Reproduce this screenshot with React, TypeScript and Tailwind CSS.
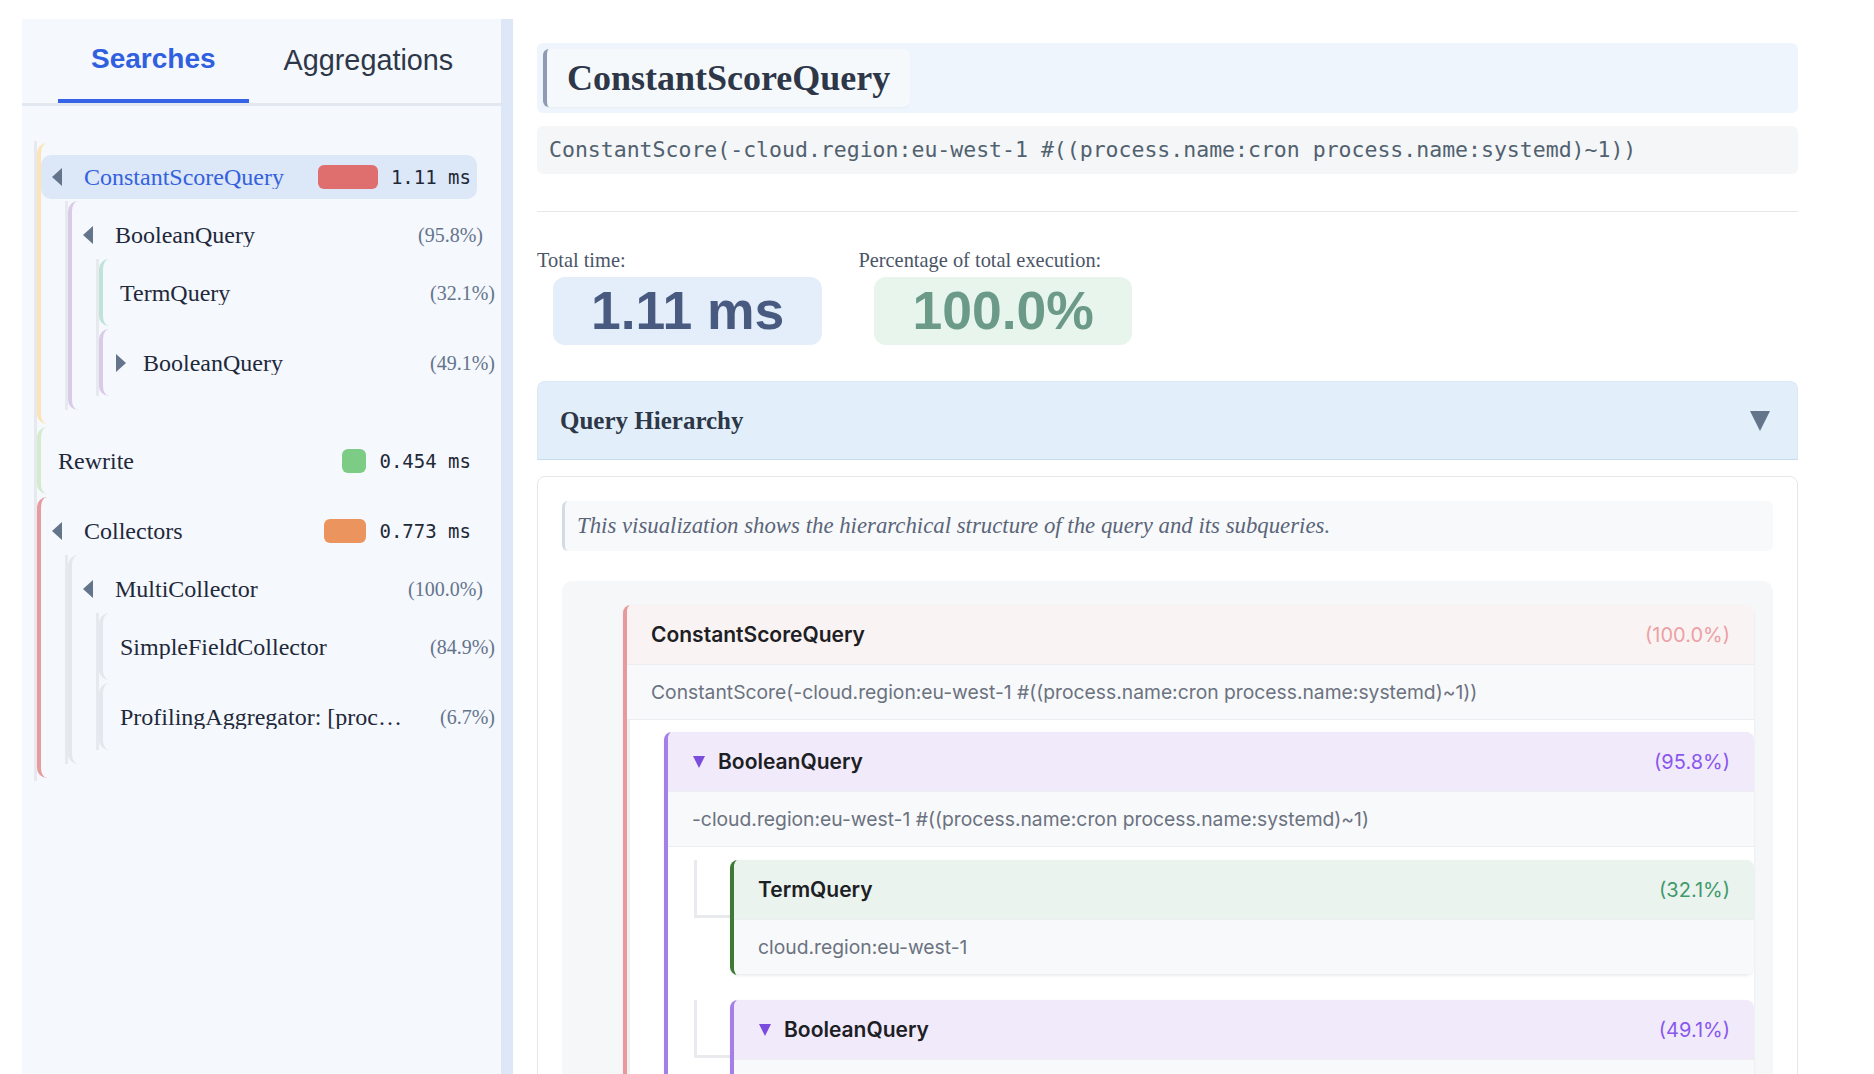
import React from "react";

const SERIF = "font-['Liberation_Serif','Times_New_Roman',serif]";
const SANS = "font-['Liberation_Sans',Arial,sans-serif]";
const MONO = "font-['DejaVu_Sans_Mono',monospace]";
const INTER = "font-['Inter',sans-serif]";

type SNode = {
  name: string;
  border: string;
  pct?: string;
  time?: string;
  barW?: number;
  barCls?: string;
  selected?: boolean;
  collapsed?: boolean;
  children?: SNode[];
};

const tree: SNode[] = [
  {
    name: "ConstantScoreQuery",
    border: "border-[#fde4b6]",
    time: "1.11 ms",
    barW: 60,
    barCls: "bg-[#df6e6e]",
    selected: true,
    children: [
      {
        name: "BooleanQuery",
        border: "border-[#d9cbe8]",
        pct: "(95.8%)",
        children: [
          { name: "TermQuery", border: "border-[#bfe3d7]", pct: "(32.1%)" },
          {
            name: "BooleanQuery",
            border: "border-[#d9cbe8]",
            pct: "(49.1%)",
            collapsed: true,
            children: [],
          },
        ],
      },
    ],
  },
  {
    name: "Rewrite",
    border: "border-[#d4ebce]",
    time: "0.454 ms",
    barW: 24,
    barCls: "bg-[#7dcc86]",
  },
  {
    name: "Collectors",
    border: "border-[#e89b9d]",
    time: "0.773 ms",
    barW: 42,
    barCls: "bg-[#ec945e]",
    children: [
      {
        name: "MultiCollector",
        border: "border-[#e3e7ee]",
        pct: "(100.0%)",
        children: [
          { name: "SimpleFieldCollector", border: "border-[#e3e7ee]", pct: "(84.9%)" },
          {
            name: "ProfilingAggregator: [process.name]",
            border: "border-[#e3e7ee]",
            pct: "(6.7%)",
          },
        ],
      },
    ],
  },
];

function LeftTri() {
  return (
    <svg width="10" height="18" viewBox="0 0 10 18" className="shrink-0">
      <polygon points="10,0 10,18 0,9" fill="#64748b" />
    </svg>
  );
}
function RightTri() {
  return (
    <svg width="10" height="18" viewBox="0 0 10 18" className="shrink-0">
      <polygon points="0,0 0,18 10,9" fill="#64748b" />
    </svg>
  );
}

function SideRow({ node, level }: { node: SNode; level: number }) {
  const hasKids = !!node.children;
  const mr = level === 0 ? "" : level === 1 ? "mr-[-12px]" : "mr-[-24px]";
  const pl = hasKids ? (node.collapsed ? "pl-[13px]" : "pl-[11px]") : "pl-[17px]";
  return (
    <div
      className={`flex items-center h-[44px] rounded-[10px] pr-[6px] ${pl} ${mr} ${
        node.selected ? "bg-[#dce7f8]" : ""
      }`}
    >
      {hasKids && (
        <span className={node.collapsed ? "mr-[17px]" : "mr-[22px]"}>
          {node.collapsed ? <RightTri /> : <LeftTri />}
        </span>
      )}
      <span
        className={`${SERIF} text-[24px] leading-none whitespace-nowrap truncate min-w-0 flex-1 ${
          node.selected ? "text-[#3562dc]" : "text-[#1e293b]"
        }`}
      >
        {node.name}
      </span>
      {node.time && (
        <div className="flex items-center shrink-0 pl-4">
          <span
            className={`h-[24px] rounded-[6px] ${node.barCls}`}
            style={{ width: node.barW }}
          />
          <span className={`${MONO} text-[19px] text-[#1f2937] ml-[13px] whitespace-nowrap`}>
            {node.time}
          </span>
        </div>
      )}
      {node.pct && (
        <span className={`${SERIF} text-[20px] text-[#64748b] shrink-0 pl-[36px] whitespace-nowrap`}>
          {node.pct}
        </span>
      )}
    </div>
  );
}

function SideNode({ node, level }: { node: SNode; level: number }) {
  const showKids = node.children && node.children.length > 0 && !node.collapsed;
  return (
    <div className={`border-l-4 rounded-l-[10px] pt-3 ${showKids ? "pb-3" : "pb-[11px]"} ${node.border}`}>
      <SideRow node={node} level={level} />
      {showKids && (
        <div className="ml-6 mt-[2px] mb-[2px] border-l-[3px] border-[#e6e9ee] flex flex-col gap-[3px]">
          {node.children!.map((c, i) => (
            <SideNode key={i} node={c} level={level + 1} />
          ))}
        </div>
      )}
    </div>
  );
}

function Sidebar() {
  return (
    <div className="w-[491px] shrink-0 h-full bg-[#f5f8fd] border-r-[12px] border-[#dde7f7] flex flex-col">
      <div className="flex pl-9 border-b-[3px] border-[#e2e8f0]">
        <div className={`${SANS} h-[84px] px-[33px] flex items-center border-b-4 border-[#3563e6] text-[28px] font-bold text-[#3060e0]`}>
          Searches
        </div>
        <div className={`${SANS} h-[84px] pl-[35px] pr-[33px] flex items-center text-[28.8px] text-[#2d3748]`}>
          Aggregations
        </div>
      </div>
      <div className="pl-3 pr-6 pt-[35px]">
        <div className="border-l-[3px] border-[#e6e9ee] pt-[2px] pb-[3px] flex flex-col gap-[3px]">
          {tree.map((n, i) => (
            <SideNode key={i} node={n} level={0} />
          ))}
        </div>
      </div>
    </div>
  );
}

type QNode = {
  name: string;
  pct: string;
  desc: string;
  border: string;
  head: string;
  pctCls: string;
  tri?: boolean;
  children?: QNode[];
};

const purple = {
  border: "border-[#a57fe8]",
  head: "bg-[#f1eafa]",
  pctCls: "text-[#8957ee]",
};
const green = {
  border: "border-[#3e7a35]",
  head: "bg-[#ebf3ee]",
  pctCls: "text-[#3f9a6c]",
};

const qtree: QNode = {
  name: "ConstantScoreQuery",
  pct: "(100.0%)",
  desc: "ConstantScore(-cloud.region:eu-west-1 #((process.name:cron process.name:systemd)~1))",
  border: "border-[#e8999b]",
  head: "bg-[#faf3f3]",
  pctCls: "text-[#eba1a4]",
  children: [
    {
      name: "BooleanQuery",
      pct: "(95.8%)",
      desc: "-cloud.region:eu-west-1 #((process.name:cron process.name:systemd)~1)",
      tri: true,
      ...purple,
      children: [
        { name: "TermQuery", pct: "(32.1%)", desc: "cloud.region:eu-west-1", ...green },
        {
          name: "BooleanQuery",
          pct: "(49.1%)",
          desc: "(process.name:cron process.name:systemd)~1",
          tri: true,
          ...purple,
          children: [
            { name: "TermQuery", pct: "(20.3%)", desc: "process.name:cron", ...green },
            { name: "TermQuery", pct: "(18.7%)", desc: "process.name:systemd", ...green },
          ],
        },
      ],
    },
  ],
};

function DownTri({ color }: { color: string }) {
  return (
    <svg width="12" height="12" viewBox="0 0 12 12" className="shrink-0">
      <polygon points="0,0 12,0 6,12" fill={color} />
    </svg>
  );
}

function QBox({ node, depth }: { node: QNode; depth: number }) {
  return (
    <div className={`bg-white rounded-[8px] border-l-4 ${node.border} shadow-[0_1px_3px_rgba(0,0,0,0.07)] overflow-hidden`}>
      <div className={`h-[60px] flex items-center justify-between pl-6 pr-6 border-b border-[#eceef1] ${node.head}`}>
        <div className="flex items-center">
          {node.tri && (
            <span className="mr-[13px] ml-[1px]">
              <DownTri color="#7b4ddc" />
            </span>
          )}
          <span className={`${INTER} font-semibold text-[21px] text-[#1c2024]`}>{node.name}</span>
        </div>
        <span className={`${INTER} text-[20px] ${node.pctCls}`}>{node.pct}</span>
      </div>
      <div className={`${INTER} h-[55px] flex items-center px-6 bg-[#f8f9fa] text-[19.3px] text-[#6b7280] border-b border-[#eceef1] whitespace-nowrap`}>
        {node.desc}
      </div>
      {node.children && depth === 0 && (
        <div className="border-l-[3px] border-[#eef0f3] pl-[34px] pt-3 pb-6 flex flex-col gap-6">
          {node.children.map((c, i) => (
            <QBox key={i} node={c} depth={depth + 1} />
          ))}
        </div>
      )}
      {node.children && depth > 0 && (
        <div className="pl-[26px] pt-[13px] pb-6 flex flex-col gap-[25px]">
          {node.children.map((c, i) => (
            <div key={i} className="flex">
              <div className="w-[36px] h-[58px] shrink-0 border-l-[3px] border-b-[3px] border-[#e8eaee]" />
              <div className="flex-1 min-w-0">
                <QBox node={c} depth={depth + 1} />
              </div>
            </div>
          ))}
        </div>
      )}
    </div>
  );
}

function Main() {
  return (
    <div className="flex-1 min-w-0 pl-6 pr-[76px] pt-6">
      <div className="bg-[#eef5fd] rounded-[6px] p-[6px]">
        <div className="inline-flex items-center h-[58px] bg-[#f6f9fc] border-l-4 border-[#8d9cb1] rounded-[6px] px-5 shadow-[0_1px_2px_rgba(0,0,0,0.04)]">
          <h1 className={`${SERIF} text-[36px] font-bold text-[#2d3748] leading-none`}>ConstantScoreQuery</h1>
        </div>
      </div>
      <div className={`mt-[13px] bg-[#f4f6f8] rounded-[6px] h-[48px] flex items-center px-3 ${MONO} text-[21.5px] text-[#51616f] whitespace-nowrap`}>
        ConstantScore(-cloud.region:eu-west-1 #((process.name:cron process.name:systemd)~1))
      </div>
      <div className="mt-[37px] border-t border-[#e5e7eb]" />
      <div className="mt-[36px] flex gap-[36px]">
        <div>
          <div className={`${SERIF} text-[20.4px] leading-[24px] text-[#4a5568]`}>Total time:</div>
          <div className={`ml-4 mt-[5px] inline-flex h-[68px] items-center px-[38px] rounded-[12px] bg-[#e3eefa] ${SANS} text-[53.5px] font-bold text-[#485a80]`}>
            1.11 ms
          </div>
        </div>
        <div>
          <div className={`${SERIF} text-[20.4px] leading-[24px] text-[#4a5568]`}>Percentage of total execution:</div>
          <div className={`ml-4 mt-[5px] inline-flex h-[68px] items-center px-[38px] rounded-[12px] bg-[#e7f5ed] ${SANS} text-[53.5px] font-bold text-[#6b9b88]`}>
            100.0%
          </div>
        </div>
      </div>
      <div className="mt-[36px] rounded-t-[8px] bg-[#e2effa] border border-[#dae9f6] border-b-[#c3dcf0] h-[79px] flex items-center justify-between pl-[22px] pr-[27px]">
        <span className={`${SERIF} text-[25px] font-bold text-[#2d3748]`}>Query Hierarchy</span>
        <svg width="20" height="20" viewBox="0 0 20 20">
          <polygon points="0,0 20,0 10,20" fill="#64748b" />
        </svg>
      </div>
      <div className="mt-4 border border-[#e5e7eb] rounded-t-[8px] p-6 bg-white">
        <div className="bg-[#f7f9fb] border-l-[3px] border-[#d3dbe6] rounded-[6px] h-[50px] flex items-center pl-3">
          <span className={`${SERIF} italic text-[22.8px] text-[#5b6579] whitespace-nowrap`}>
            This visualization shows the hierarchical structure of the query and its subqueries.
          </span>
        </div>
        <div className="mt-[30px] bg-[#f5f7f9] rounded-[10px] pt-6 pl-[61px] pr-[19px] pb-6">
          <QBox node={qtree} depth={0} />
        </div>
      </div>
    </div>
  );
}

export default function App() {
  return (
    <div className="w-full h-screen overflow-hidden bg-white flex pt-[19px] pl-[22px]">
      <Sidebar />
      <Main />
    </div>
  );
}
